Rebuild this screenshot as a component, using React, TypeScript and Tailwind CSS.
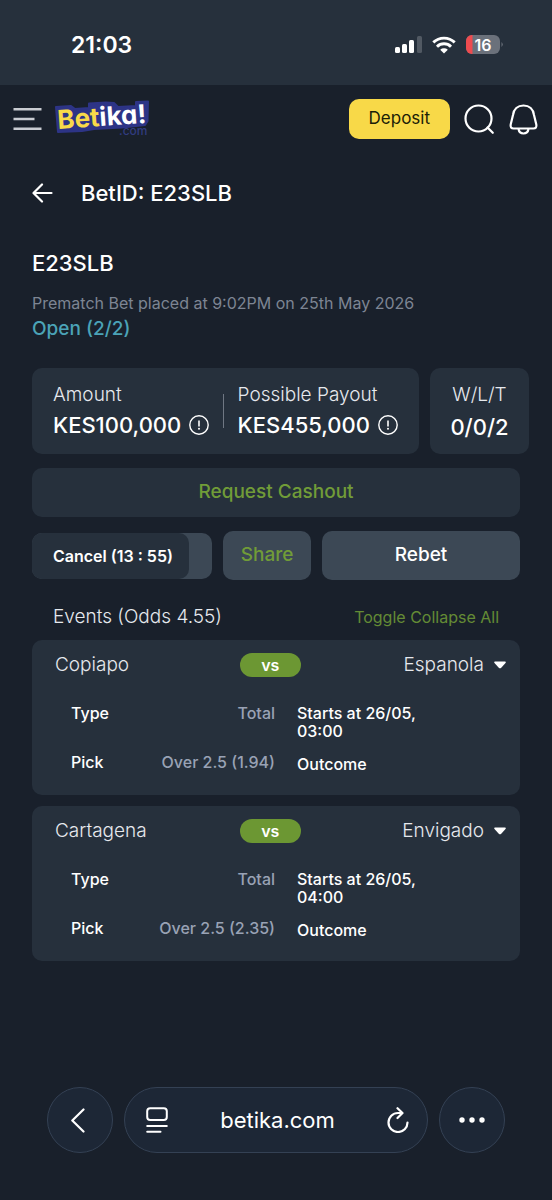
import React, { useState } from 'react';

interface BetEvent {
  home: string;
  away: string;
  type: string;
  pick: string;
  startDate: string;
  startTime: string;
}

const EVENTS: BetEvent[] = [
  { home: 'Copiapo', away: 'Espanola', type: 'Total', pick: 'Over 2.5 (1.94)', startDate: '26/05', startTime: '03:00' },
  { home: 'Cartagena', away: 'Envigado', type: 'Total', pick: 'Over 2.5 (2.35)', startDate: '26/05', startTime: '04:00' },
];

const StatusBar = () => (
  <div className="flex h-[85px] items-center justify-between bg-[#26303c] pt-1 pr-12 pl-[71px]">
    <span className="text-[23px] font-semibold leading-7">21:03</span>
    <div className="flex items-center gap-2.5">
      <svg width="27" height="18" viewBox="0 0 27 18" fill="#fff">
        <rect x="0" y="11" width="5" height="6" rx="1.5" />
        <rect x="7" y="8" width="5" height="9" rx="1.5" />
        <rect x="14" y="4" width="5" height="13" rx="1.5" />
        <rect x="22" y="0" width="5" height="17" rx="1.5" opacity="0.2" />
      </svg>
      <svg width="24" height="18" viewBox="0 0 24 18" fill="none" stroke="#fff" strokeWidth="2.9">
        <path d="M1.3 6.4a15.4 15.4 0 0 1 21.4 0" />
        <path d="M5 10.7a9.9 9.9 0 0 1 14 0" />
        <path d="M8.2 13.7a5.6 5.6 0 0 1 7.6 0L12 17.6z" fill="#fff" stroke="none" />
      </svg>
      <svg width="38" height="20" viewBox="0 0 38 20">
        <rect width="34" height="19" rx="6" fill="#6b717b" />
        <path d="M6 0H6.500V19H6A6 6 0 0 1 0 13V6A6 6 0 0 1 6 0z" fill="#ee4b4f" />
        <path d="M35.500 7a3.500 3.500 0 0 1 0 5z" fill="#6b717b" />
        <text x="17" y="15.500" textAnchor="middle" fontSize="16" fontWeight="600" fill="#fff">
          16
        </text>
      </svg>
    </div>
  </div>
);

const Logo = () => (
  <svg width="98" height="40" viewBox="0 0 98 40" role="img" aria-label="Betika.com">
    <text x="65" y="36" fontSize="12" fontWeight="500" fill="#313c80">
      .com
    </text>
    <path
      d="M2 8L17 7L21 10L35 9V4.500L52 3.500L60 4L64 8L82 7V3L94 2.500L93.500 22L91 26L68 28.500L40 30L28 32L4 33Z"
      fill="#2d3486"
      stroke="#2d3486"
      strokeWidth="2"
      strokeLinejoin="round"
    />
    {/* cv11 is Inter's single-storey a */}
    <text
      x="4"
      y="30"
      transform="rotate(-4 4 30)"
      fontSize="26"
      fontWeight="700"
      style={{ fontFeatureSettings: '"cv11"' }}
    >
      <tspan fill="#f8da49">Bet</tspan>
      <tspan fill="#fff">ika!</tspan>
    </text>
  </svg>
);

const Header = () => (
  <header className="flex h-[68px] items-center pr-3.5 pl-[13px]">
    <button aria-label="Menu">
      <svg width="29" height="24" viewBox="0 0 29 24" stroke="#c9ccd2" strokeWidth="2.500">
        <path d="M0.500 2.300H28.500M0.500 12H21.500M0.500 21.700H28.500" />
      </svg>
    </button>
    <a href="#" className="ml-3">
      <Logo />
    </a>
    <button className="ml-auto h-10 rounded-[10px] bg-[#f8d948] px-5 text-[17px] text-[#1b2007]">Deposit</button>
    <button aria-label="Search" className="ml-3.5">
      <svg width="31" height="31" viewBox="0 0 31 31" fill="none" stroke="#fff" strokeWidth="2.200" strokeLinecap="round">
        <circle cx="14.500" cy="14.500" r="13" />
        <path d="M23.500 23.500L28.800 28.800" />
      </svg>
    </button>
    <button aria-label="Notifications" className="ml-3.5">
      <svg width="29" height="31" viewBox="0 0 29 31" fill="none" stroke="#fff" strokeWidth="2.200" strokeLinejoin="round">
        <path d="M14.500 1.500C8.700 1.500 4.700 5.400 4 11L1.700 20.500C1.100 23.200 2.300 24.500 4.600 24.500H24.400C26.700 24.500 27.900 23.200 27.300 20.500L25 11C24.300 5.400 20.300 1.500 14.500 1.500Z" />
        <path d="M9.500 25C10 28 12 29.500 14.500 29.500S19 28 19.500 25" />
      </svg>
    </button>
  </header>
);

const InfoIcon = () => (
  <svg width="20" height="20" viewBox="0 0 20 20" fill="none" stroke="#fff" strokeWidth="1.400">
    <circle cx="10" cy="10" r="9.200" />
    <path d="M10 5.500V11.400" strokeWidth="1.600" />
    <circle cx="10" cy="13.800" r="1" fill="#fff" stroke="none" />
  </svg>
);

const Stat = ({ label, value }: { label: string; value: string }) => (
  <div>
    <div className="text-[19px] font-light leading-7 text-[#e6e9ee]">{label}</div>
    <div className="flex items-center gap-2 text-[22px] font-medium leading-8">
      {value}
      <InfoIcon />
    </div>
  </div>
);

const EventCard = ({ event, open, onToggle }: { event: BetEvent; open: boolean; onToggle: () => void }) => (
  <article className="rounded-[10px] bg-[#26303c] pt-[11px] pb-[22px]">
    <button
      onClick={onToggle}
      aria-expanded={open}
      className="grid w-full grid-cols-[9fr_3fr_10fr] items-center pr-3.5 pl-[23px] text-[19px] font-light leading-7 text-[#e6e9ee]"
    >
      <span className="text-left">{event.home}</span>
      <span className="h-6 rounded-full bg-[#6c9733] text-base font-semibold leading-6 text-white">vs</span>
      <span className="flex items-center justify-end gap-2.5">
        {event.away}
        <svg width="12" height="8" viewBox="0 0 12 7" fill="#fff">
          <path d="M1 0H11Q12.400 0.400 11.500 1.500L7 6.400Q6 7.300 5 6.400L0.500 1.500Q-0.400 0.400 1 0z" />
        </svg>
      </span>
    </button>
    {open && (
      <div className="mt-[25px] grid grid-cols-2 gap-x-[22px] pr-[19px] pl-[39px] text-base font-medium">
        <dl className="flex flex-col gap-[31px] leading-[18px]">
          <div className="flex justify-between">
            <dt>Type</dt>
            <dd className="text-[#99a2b5]">{event.type}</dd>
          </div>
          <div className="flex justify-between">
            <dt>Pick</dt>
            <dd className="text-[#99a2b5]">{event.pick}</dd>
          </div>
        </dl>
        <div className="leading-[18px]">
          <p>
            Starts at {event.startDate},
            <br />
            {event.startTime}
          </p>
          <p className="mt-[15px]">Outcome</p>
        </div>
      </div>
    )}
  </article>
);

const BrowserBar = () => (
  <nav className="mt-auto flex gap-[11px] px-[47px] pb-[47px]">
    <button
      aria-label="Back"
      className="flex size-[66px] shrink-0 items-center justify-center rounded-full border border-[#344154] bg-[#1d2736] pr-1"
    >
      <svg width="14" height="25" viewBox="0 0 14 25" fill="none" stroke="#fff" strokeWidth="2.200" strokeLinecap="round" strokeLinejoin="round">
        <path d="M12.500 1.500L1.300 12.500L12.500 23.500" />
      </svg>
    </button>
    <div className="flex h-[66px] flex-1 items-center justify-between rounded-full border border-[#344154] bg-[#1d2736] pr-[18px] pl-[21px]">
      <button aria-label="Page menu">
        <svg width="22" height="26" viewBox="0 0 22 26" fill="none" stroke="#fff" strokeWidth="2" strokeLinecap="round">
          <rect x="1.200" y="1.200" width="19.600" height="11.800" rx="3" />
          <path d="M1.200 19H20.800M1.200 24.800H14.500" />
        </svg>
      </button>
      <a href="#" className="text-[22px] font-normal">
        betika.com
      </a>
      <button aria-label="Reload">
        <svg width="22" height="26" viewBox="0 0 22 26" fill="none" stroke="#fff" strokeWidth="2.200" strokeLinecap="round" strokeLinejoin="round">
          <path d="M14.500 6H11A9.500 9.500 0 1 0 20.500 15.500" />
          <path d="M10.500 1.200L15.500 6L10.500 11" />
        </svg>
      </button>
    </div>
    <button
      aria-label="More"
      className="flex size-[66px] shrink-0 items-center justify-center rounded-full border border-[#344154] bg-[#1d2736]"
    >
      <svg width="26" height="6" viewBox="0 0 26 6" fill="#fff">
        <circle cx="3" cy="3" r="2.700" />
        <circle cx="13" cy="3" r="2.700" />
        <circle cx="23" cy="3" r="2.700" />
      </svg>
    </button>
  </nav>
);

export default function App() {
  const [open, setOpen] = useState<boolean[]>(EVENTS.map(() => true));

  const toggle = (index: number) => setOpen(open.map((o, i) => (i === index ? !o : o)));
  const toggleAll = () => setOpen(open.map(() => !open.some(Boolean)));

  return (
    <div className="flex min-h-screen flex-col bg-[#19202b] font-['Inter','Liberation_Sans',sans-serif] text-white">
      <StatusBar />
      <Header />

      <main className="px-8">
        <div className="flex h-20 items-center gap-7">
          <button aria-label="Go back">
            <svg width="21" height="20" viewBox="0 0 21 20" fill="none" stroke="#fff" strokeWidth="2.200" strokeLinecap="round" strokeLinejoin="round">
              <path d="M19.500 10H2M10 1.500L1.500 10L10 18.500" />
            </svg>
          </button>
          <h1 className="text-[22px] font-medium">BetID: E23SLB</h1>
        </div>

        <h2 className="mt-4 text-[22px] font-medium leading-7">E23SLB</h2>
        <p className="mt-3.5 text-base leading-6 text-[#7d8593]">Prematch Bet placed at 9:02PM on 25th May 2026</p>
        <p className="text-[19px] font-medium leading-7 text-[#4ba3b7]">Open (2/2)</p>

        {/* Stake summary */}
        <section className="mt-[25px] -mr-[9px] flex gap-[11px]">
          <div className="flex flex-1 items-center justify-between rounded-[10px] bg-[#26303c] px-[21px] py-[13px]">
            <Stat label="Amount" value="KES100,000" />
            <div className="h-[34px] w-px bg-[#6f7783]" />
            <Stat label="Possible Payout" value="KES455,000" />
          </div>
          <div className="flex w-[99px] flex-col items-center justify-center rounded-[10px] bg-[#26303c]">
            <div className="text-[19px] font-light leading-8 text-[#e6e9ee]">W/L/T</div>
            <div className="text-[22px] font-medium leading-8">0/0/2</div>
          </div>
        </section>

        <button className="mt-3.5 h-[49px] w-full rounded-[10px] bg-[#26303c] text-[19px] font-medium text-[#719c38]">
          Request Cashout
        </button>

        <div className="mt-3.5 flex items-center gap-[11px]">
          <div className="flex w-[180px] rounded-[10px] bg-[#3c4855] pr-[23px]">
            <button className="h-[46px] w-full rounded-[10px] bg-[#26303c] pl-[21px] text-left text-base font-semibold">
              Cancel (13 : 55)
            </button>
          </div>
          <button className="h-[49px] w-[88px] rounded-[10px] bg-[#3c4855] text-[19px] font-medium text-[#719c38]">
            Share
          </button>
          <button className="h-[49px] flex-1 rounded-[10px] bg-[#3c4855] text-[19px] font-medium">Rebet</button>
        </div>

        <div className="flex h-[60px] items-center justify-between px-[21px] pt-3.5">
          <h3 className="text-[19px] font-light text-[#e6e9ee]">Events (Odds 4.55)</h3>
          <button onClick={toggleAll} className="text-base text-[#648b35]">
            Toggle Collapse All
          </button>
        </div>

        <section className="flex flex-col gap-[11px]">
          {EVENTS.map((event, i) => (
            <EventCard key={event.home} event={event} open={open[i]} onToggle={() => toggle(i)} />
          ))}
        </section>
      </main>

      <BrowserBar />
    </div>
  );
}
